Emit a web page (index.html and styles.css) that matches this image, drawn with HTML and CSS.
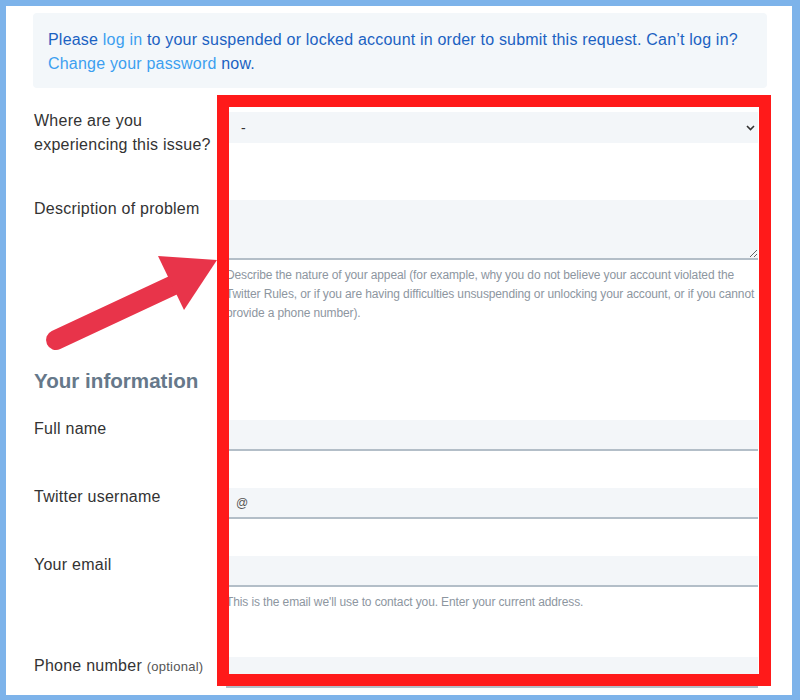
FILE: index.html
```html
<!DOCTYPE html>
<html lang="en">

<head>
    <meta charset="utf-8">
    <meta name="viewport" content="width=device-width, initial-scale=1.0">
    <title>Appeal a locked or suspended account</title>
    <link rel="stylesheet" href="styles.css">
</head>

<body>
    <div class="frame">
        <div class="content">
            <div class="notice">
                Please <a href="#">log in</a> to your suspended or locked account in order to submit this request. Can’t log in?
                <a href="#">Change your password</a> now.
            </div>

            <form class="appeal-form">
                <div class="row row-tall">
                    <label class="label" for="issueWhere">Where are you experiencing this issue?</label>
                    <div class="field">
                        <div class="select-wrap">
                            <select id="issueWhere" class="select">
                                <option>-</option>
                            </select>
                            <svg class="chevron" width="9" height="6" viewBox="0 0 9 6">
                                <path d="M1 1l3.5 3.5L8 1" fill="none" stroke="#333" stroke-width="1.6" />
                            </svg>
                        </div>
                    </div>
                </div>

                <div class="row">
                    <label class="label" for="description">Description of problem</label>
                    <div class="field">
                        <textarea id="description" class="textarea"></textarea>
                        <p class="hint">Describe the nature of your appeal (for example, why you do not believe your account violated the Twitter Rules, or if you are having difficulties unsuspending or unlocking your account, or if you cannot provide a phone number).</p>
                    </div>
                </div>

                <h2 class="section-title">Your information</h2>

                <div class="row">
                    <label class="label" for="fullName">Full name</label>
                    <div class="field">
                        <input type="text" id="fullName" class="input">
                    </div>
                </div>

                <div class="row">
                    <label class="label" for="username">Twitter username</label>
                    <div class="field">
                        <input type="text" id="username" class="input" value="@">
                    </div>
                </div>

                <div class="row">
                    <label class="label" for="email">Your email</label>
                    <div class="field">
                        <input type="email" id="email" class="input">
                        <p class="hint">This is the email we'll use to contact you. Enter your current address.</p>
                    </div>
                </div>

                <div class="row">
                    <label class="label" for="phone">Phone number <span class="optional">(optional)</span></label>
                    <div class="field">
                        <input type="tel" id="phone" class="input">
                    </div>
                </div>
            </form>
        </div>

        <!-- annotation drawn over the screenshot -->
        <div class="highlight-box"></div>
        <svg class="arrow" width="230" height="110" viewBox="0 0 230 110">
            <line x1="50" y1="94" x2="172" y2="37" stroke="#e8344a" stroke-width="20" stroke-linecap="round" />
            <polygon points="152,10 211,14 178,64" fill="#e8344a" />
        </svg>
    </div>
</body>

</html>
```

FILE: styles.css
```css
* {
    margin: 0;
    padding: 0;
    box-sizing: border-box;
}

body {
    font-family: "Liberation Sans", Arial, sans-serif;
    background: #7db3ea;
    padding: 6px 8px 5px 6px;
    color: #333;
}

.frame {
    position: relative;
    height: 689px;
    background: #ffffff;
    overflow: hidden;
}

.content {
    padding: 7px 25px 0 27px;
}

.notice {
    background: #f3f7fa;
    border-radius: 4px;
    padding: 15px 15px 12px;
    font-size: 16px;
    line-height: 24px;
    letter-spacing: 0.2px;
    color: #1b62c2;
}

.notice a {
    color: #3c9ff0;
    text-decoration: none;
}

.appeal-form {
    padding: 20px 9px 0 1px;
}

.row {
    display: flex;
    margin-bottom: 33px;
}

.row-tall {
    margin-bottom: 39px;
}

.label {
    width: 192px;
    flex-shrink: 0;
    padding: 1px 8px 0 0;
    font-size: 16px;
    line-height: 24px;
    letter-spacing: 0.25px;
    color: #333;
}

.optional {
    font-size: 13px;
    color: #555;
}

.field {
    flex: 1;
    padding-top: 4px;
}

.select-wrap {
    position: relative;
}

.select {
    appearance: none;
    width: 100%;
    height: 31px;
    border: none;
    background: #f3f6f9;
    padding: 0 15px;
    font-family: inherit;
    font-size: 14px;
    color: #333;
    outline: none;
}

.chevron {
    position: absolute;
    right: 3px;
    top: 13px;
}

.textarea {
    display: block;
    width: 100%;
    height: 60px;
    border: none;
    border-bottom: 2px solid #b3bec8;
    background: #f3f6f9;
    outline: none;
    resize: vertical;
}

.input {
    display: block;
    width: 100%;
    height: 31px;
    border: none;
    border-bottom: 2px solid #b3bec8;
    background: #f3f6f9;
    padding: 0 10px;
    font-family: inherit;
    font-size: 12px;
    color: #555;
    outline: none;
}

.hint {
    margin: 6px 0 8px;
    font-size: 12px;
    line-height: 19px;
    letter-spacing: -0.12px;
    color: #8d969f;
}

.section-title {
    font-size: 20.6px;
    line-height: 28px;
    font-weight: 700;
    color: #66788a;
    margin: 36px 0 21px;
}

.highlight-box {
    position: absolute;
    left: 211px;
    top: 89px;
    width: 554px;
    height: 591px;
    border: 12px solid #ff1a1a;
    pointer-events: none;
}

.arrow {
    position: absolute;
    left: 0;
    top: 240px;
}
```
